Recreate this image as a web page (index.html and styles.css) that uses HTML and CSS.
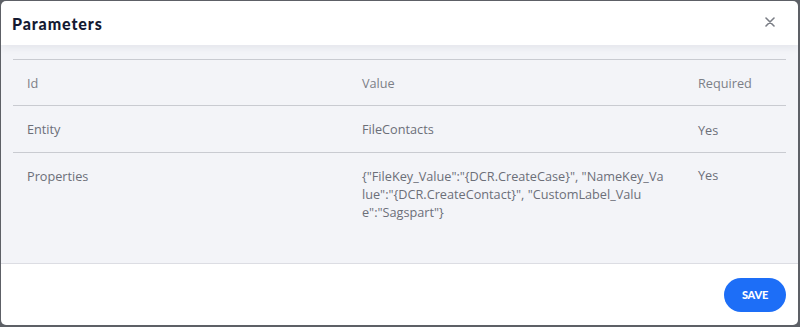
FILE: index.html
```html
<!DOCTYPE html>
<html lang="en">

<head>
  <meta charset="UTF-8">
  <meta name="viewport" content="width=device-width, initial-scale=1.0">
  <title>Parameters</title>

  <!-- Internal CSS file -->
  <link rel="stylesheet" href="styles.css">
</head>

<body>
  <div class="modal">
    <header class="modal-header">
      <h1>Parameters</h1>
      <button class="close" aria-label="Close">
        <svg width="10" height="10" viewBox="0 0 10 10">
          <path d="M1 1 L9 9 M9 1 L1 9" stroke="#7a7d85" stroke-width="1.6" stroke-linecap="round" />
        </svg>
      </button>
    </header>
    <main class="modal-body">
      <table class="params">
        <thead>
          <tr>
            <th class="col-id">Id</th>
            <th class="col-value">Value</th>
            <th class="col-req">Required</th>
          </tr>
        </thead>
        <tbody>
          <tr>
            <td>Entity</td>
            <td>FileContacts</td>
            <td class="req">Yes</td>
          </tr>
          <tr class="last">
            <td>Properties</td>
            <td class="json">{"FileKey_Value":"{DCR.CreateCase}", "NameKey_Va<br>lue":"{DCR.CreateContact}", "CustomLabel_Valu<br>e":"Sagspart"}</td>
            <td class="req">Yes</td>
          </tr>
        </tbody>
      </table>
    </main>
    <footer class="modal-footer">
      <button class="save">SAVE</button>
    </footer>
  </div>
</body>

</html>
```

FILE: styles.css
```css
html {
  padding: 0;
  margin: 0;
  background: #5d6066;
}

body {
  margin: 0;
  padding: 1px;
  font-family: "Open Sans", "Noto Sans", sans-serif;
}

.modal {
  width: 797px;
  height: 324px;
  background: #fff;
  border-radius: 5px;
  overflow: hidden;
  display: flex;
  flex-direction: column;
}

.modal-header {
  height: 44px;
  flex: none;
  display: flex;
  align-items: center;
  justify-content: space-between;
  padding: 0 23px 0 11px;
  position: relative;
  z-index: 1;
  box-shadow: 0 2px 8px rgba(30, 35, 60, 0.08);
}

h1 {
  margin: 0;
  font-family: "Lato", sans-serif;
  font-size: 16px;
  font-weight: 900;
  color: #141a32;
  letter-spacing: 0.9px;
}

.close {
  border: 0;
  background: none;
  padding: 0;
  display: flex;
  margin-top: -3px;
}

.modal-body {
  flex: 1;
  background: #f3f4f8;
  padding: 14px 12px 0 12px;
  border-bottom: 1px solid #dcdde3;
}

.params {
  width: 773px;
  border-collapse: collapse;
  table-layout: fixed;
  font-size: 12.7px;
  color: #6c6f78;
}

.params th,
.params td {
  text-align: left;
  font-weight: 400;
  padding: 14px 14px 14px 14px;
  line-height: 18px;
  vertical-align: top;
  border-top: 1px solid #c9cbd1;
}

.params th {
  padding: 14px 14px 13px 14px;
  color: #7c7f87;
}

.col-id {
  width: 307px;
}

.col-value {
  width: 308px;
}

.params td.req {
  padding-top: 15px;
  padding-bottom: 13px;
}

.params .last td.req {
  padding-top: 13px;
}

.json {
  white-space: nowrap;
}

.modal-footer {
  height: 61px;
  flex: none;
  display: flex;
  align-items: center;
  justify-content: flex-end;
  padding: 0 12px;
}

.save {
  width: 62px;
  height: 34px;
  border: 0;
  border-radius: 17px;
  background: #1d6ef7;
  color: #fff;
  font-family: "Lato", sans-serif;
  font-size: 11px;
  font-weight: 900;
  letter-spacing: -0.2px;
}
```
